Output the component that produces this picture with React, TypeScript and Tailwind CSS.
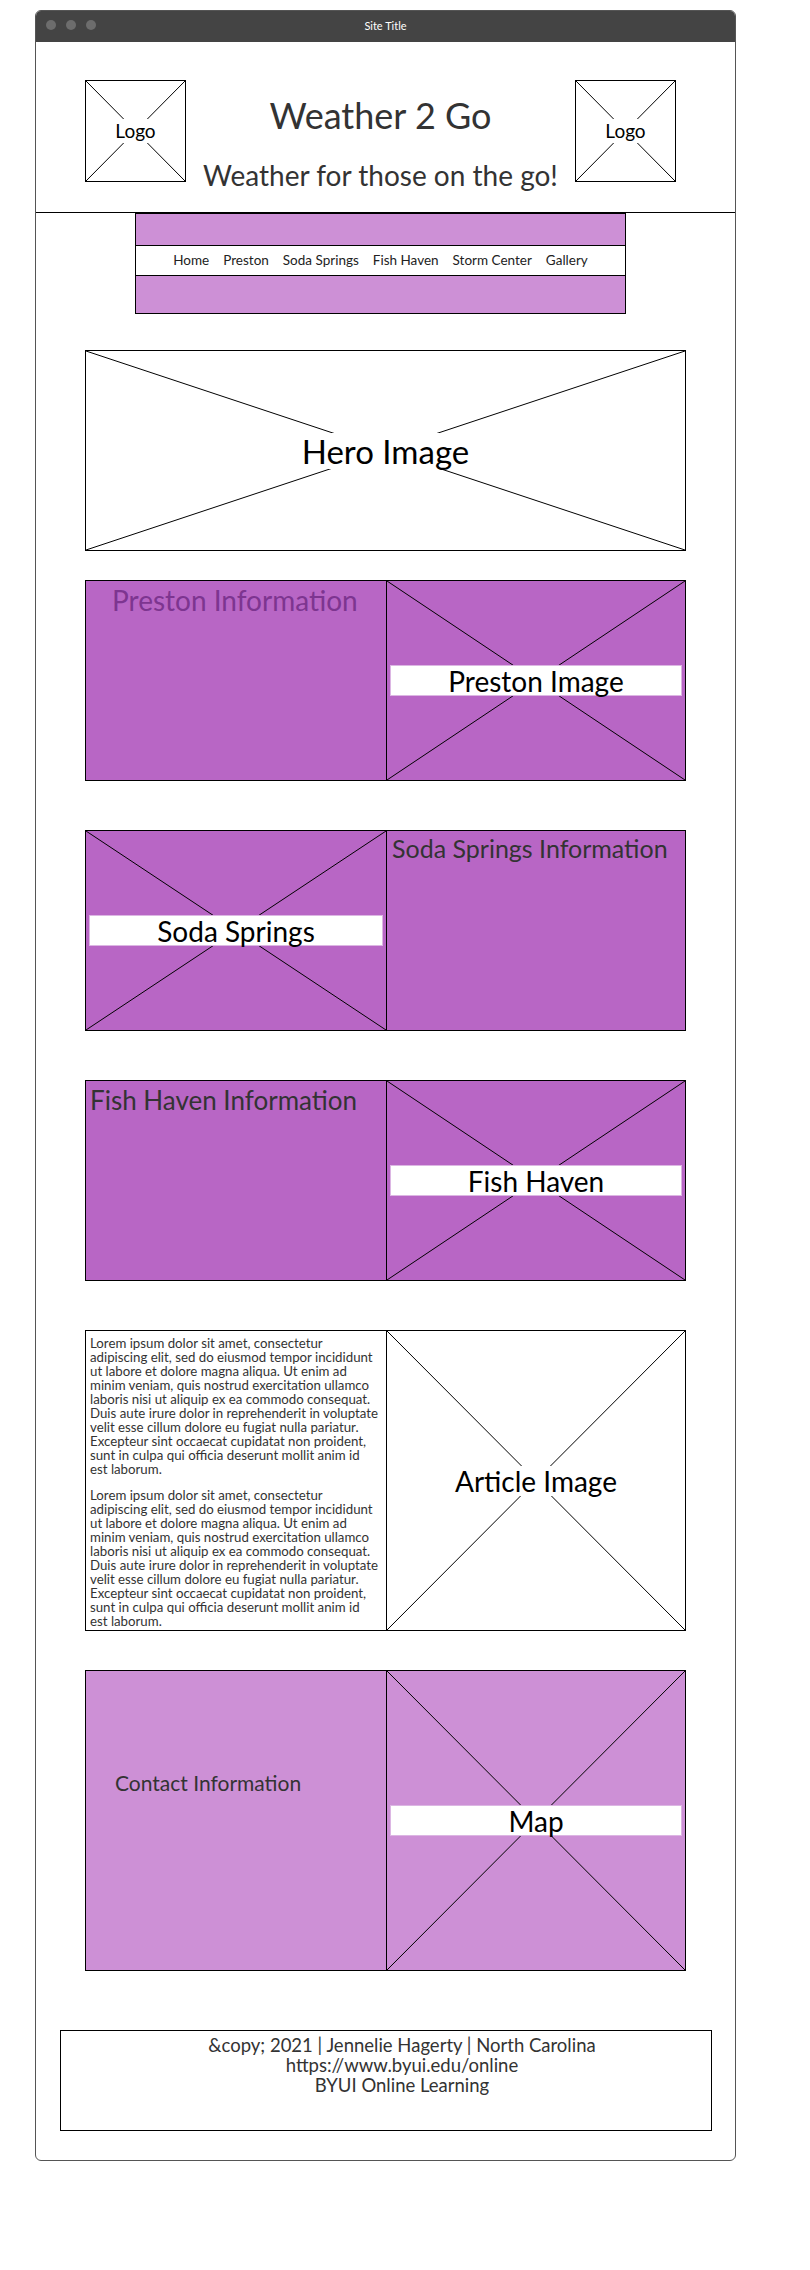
import React from "react";

const navLinks = ["Home", "Preston", "Soda Springs", "Fish Haven", "Storm Center", "Gallery"];

const lorem = [
  "Lorem ipsum dolor sit amet, consectetur",
  "adipiscing elit, sed do eiusmod tempor incididunt",
  "ut labore et dolore magna aliqua. Ut enim ad",
  "minim veniam, quis nostrud exercitation ullamco",
  "laboris nisi ut aliquip ex ea commodo consequat.",
  "Duis aute irure dolor in reprehenderit in voluptate",
  "velit esse cillum dolore eu fugiat nulla pariatur.",
  "Excepteur sint occaecat cupidatat non proident,",
  "sunt in culpa qui officia deserunt mollit anim id",
  "est laborum.",
];

// wireframe placeholder: box with an X and a label band in the middle
function CrossBox({
  label,
  className,
  bandClass,
  textClass,
}: {
  label: string;
  className: string;
  bandClass: string;
  textClass: string;
}) {
  return (
    <div className={`relative flex items-center ${className}`}>
      <svg
        className="absolute inset-0 h-full w-full"
        viewBox="0 0 100 100"
        preserveAspectRatio="none"
      >
        <line x1="0" y1="0" x2="100" y2="100" stroke="#000" strokeWidth="1" vectorEffect="non-scaling-stroke" />
        <line x1="100" y1="0" x2="0" y2="100" stroke="#000" strokeWidth="1" vectorEffect="non-scaling-stroke" />
      </svg>
      <div className={`relative flex items-center justify-center ${bandClass}`}>
        <span className={textClass}>{label}</span>
      </div>
    </div>
  );
}

const imgBand = "mx-[3px] w-full h-[31px] bg-white border border-[#dcb6e3]";
const imgText = "text-[28px] leading-[30px] text-black";

export default function App() {
  return (
    <div className="min-h-[2270px] bg-white pt-[10px] font-['Lato',sans-serif]">
      <div className="ml-[35px] flex h-[2151px] w-[701px] flex-col overflow-hidden rounded-[6px] border border-[#555]">
        {/* Title bar */}
        <div className="relative flex h-[31px] shrink-0 items-center bg-[#444] pl-[10px]">
          <div className="flex gap-[10px] -mt-[3px]">
            <span className="h-[10px] w-[10px] rounded-full bg-[#6d6d6d]" />
            <span className="h-[10px] w-[10px] rounded-full bg-[#6d6d6d]" />
            <span className="h-[10px] w-[10px] rounded-full bg-[#6d6d6d]" />
          </div>
          <span className="absolute left-0 right-0 text-center text-[11px] text-white">Site Title</span>
        </div>

        {/* Header */}
        <header className="flex h-[171px] shrink-0 items-start border-b border-black pl-[49px] pr-[59px] pt-[38px]">
          <CrossBox
            label="Logo"
            className="h-[102px] w-[101px] shrink-0 border border-black"
            bandClass="w-full h-[24px] bg-white"
            textClass="text-[19px] leading-[24px] text-black"
          />
          <div className="flex-1 text-center text-[#333]">
            <h1 className="mt-[13px] text-[36px] leading-[44px]">Weather 2 Go</h1>
            <p className="mt-[21px] text-[28px] leading-[34px]">Weather for those on the go!</p>
          </div>
          <CrossBox
            label="Logo"
            className="h-[102px] w-[101px] shrink-0 border border-black"
            bandClass="w-full h-[24px] bg-white"
            textClass="text-[19px] leading-[24px] text-black"
          />
        </header>

        {/* Nav */}
        <nav className="ml-[99px] w-[491px] shrink-0 border border-black">
          <div className="h-[31px] bg-[#cd90d6]" />
          <ul className="flex h-[31px] items-center justify-center gap-[14px] border-y border-black bg-white text-[13.5px] text-[#222]">
            {navLinks.map((link) => (
              <li key={link}>{link}</li>
            ))}
          </ul>
          <div className="h-[37px] bg-[#cd90d6]" />
        </nav>

        <main className="flex flex-col pl-[49px]">
          {/* Hero */}
          <CrossBox
            label="Hero Image"
            className="mt-[36px] h-[201px] w-[601px] border border-black bg-white"
            bandClass="w-full h-[36px] bg-white"
            textClass="text-[33px] leading-[36px] text-black"
          />

          {/* Preston */}
          <section className="mt-[29px] flex h-[201px] w-[601px] border border-black bg-[#b866c5]">
            <div className="w-[300px] pl-[26px] pt-[2px]">
              <h2 className="text-[28px] leading-[34px] text-[#7d3590]">Preston Information</h2>
            </div>
            <CrossBox label="Preston Image" className="flex-1 border-l border-black" bandClass={imgBand} textClass={imgText} />
          </section>

          {/* Soda Springs */}
          <section className="mt-[49px] flex h-[201px] w-[601px] border border-black bg-[#b866c5]">
            <CrossBox label="Soda Springs" className="w-[300px]" bandClass={imgBand} textClass={imgText} />
            <div className="flex-1 border-l border-black pl-[5px] pt-[2px]">
              <h2 className="text-[25px] leading-[30px] text-[#333]">Soda Springs Information</h2>
            </div>
          </section>

          {/* Fish Haven */}
          <section className="mt-[49px] flex h-[201px] w-[601px] border border-black bg-[#b866c5]">
            <div className="w-[300px] pl-[4px] pt-[4px]">
              <h2 className="text-[26px] leading-[30px] text-[#333]">Fish Haven Information</h2>
            </div>
            <CrossBox label="Fish Haven" className="flex-1 border-l border-black" bandClass={imgBand} textClass={imgText} />
          </section>

          {/* Article */}
          <section className="mt-[49px] flex h-[301px] w-[601px] border border-black bg-white">
            <div className="w-[300px] px-[4px] pt-[5px] text-[13.25px] leading-[14px] text-[#333]">
              <p>
                {lorem.map((line) => (
                  <span key={line} className="block whitespace-nowrap">{line}</span>
                ))}
              </p>
              <p className="mt-[12px]">
                {lorem.map((line) => (
                  <span key={line} className="block whitespace-nowrap">{line}</span>
                ))}
              </p>
            </div>
            <CrossBox
              label="Article Image"
              className="flex-1 border-l border-black"
              bandClass="w-full h-[30px] bg-white"
              textClass="text-[28px] leading-[30px] text-black"
            />
          </section>

          {/* Contact */}
          <section className="mt-[39px] flex h-[301px] w-[601px] border border-black bg-[#cd90d6]">
            <div className="w-[300px] pl-[29px] pt-[99px]">
              <h2 className="text-[21px] leading-[25px] text-[#333]">Contact Information</h2>
            </div>
            <CrossBox label="Map" className="flex-1 border-l border-black" bandClass={imgBand} textClass={imgText} />
          </section>
        </main>

        {/* Footer */}
        <footer className="ml-[24px] mt-[59px] h-[101px] w-[652px] border border-black pl-[32px] pt-[4px] text-center text-[18.5px] leading-[20px] text-[#333]">
          <p>&amp;copy; 2021 | Jennelie Hagerty | North Carolina</p>
          <p>https://www.byui.edu/online</p>
          <p>BYUI Online Learning</p>
        </footer>
      </div>
    </div>
  );
}
